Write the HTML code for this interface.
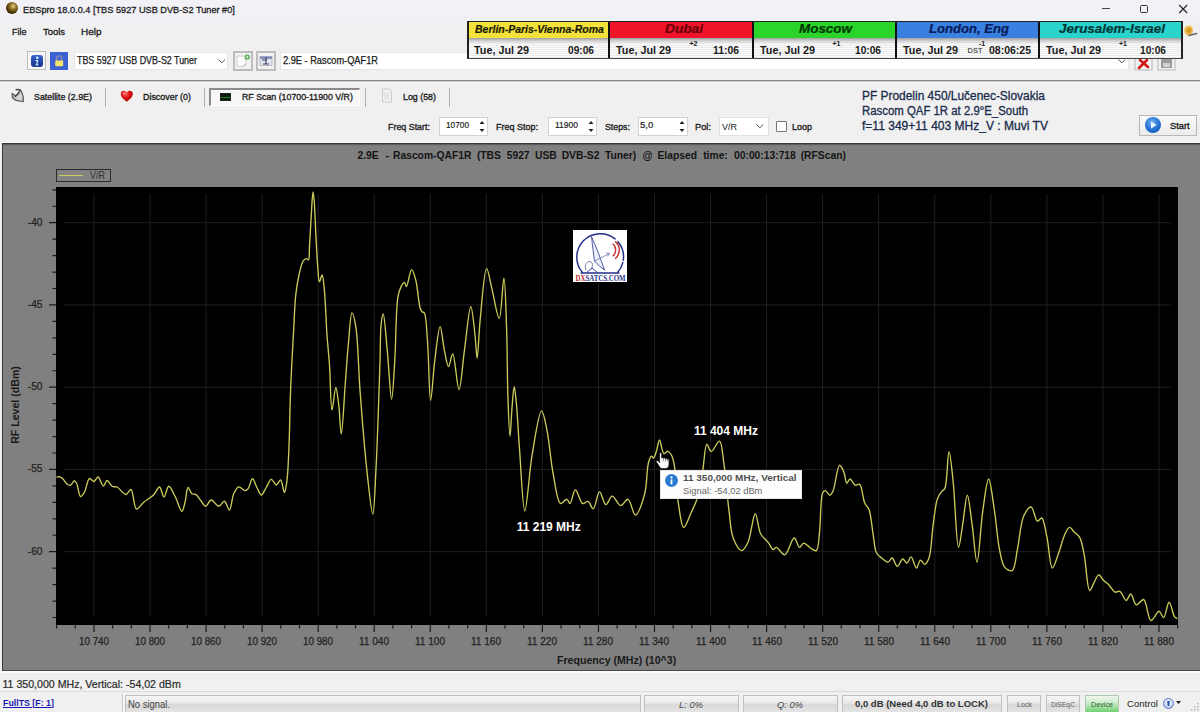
<!DOCTYPE html>
<html><head><meta charset="utf-8"><style>
html,body{margin:0;padding:0}
body{width:1200px;height:712px;overflow:hidden;position:relative;background:#f0f0f0;font-family:"Liberation Sans",sans-serif}
.t{position:absolute;white-space:nowrap;line-height:1;font-family:"Liberation Sans",sans-serif}
.r{position:absolute;box-sizing:border-box}
svg.r{overflow:visible}
</style></head><body>
<div class="r" style="left:0px;top:0px;width:1200px;height:22px;background:#f2f1f6"></div>
<div class="r" style="left:6px;top:2px;width:12px;height:12px;border-radius:50%;background:radial-gradient(circle at 60% 35%,#e8d8a0 0,#a08030 25%,#4a3508 60%,#1e1400 100%)"></div>
<div class="t" style="left:23.30px;top:4.57px;font-size:9.6px;font-weight:400;color:#1c1c1c;transform:scaleX(0.9573);transform-origin:0 0;-webkit-text-stroke:0.3px #1c1c1c;">EBSpro 18.0.0.4 [TBS 5927 USB DVB-S2 Tuner #0]</div>
<div class="r" style="left:1102px;top:8px;width:8px;height:1.3px;background:#444"></div>
<div class="r" style="left:1139.5px;top:5px;width:8.5px;height:8px;border:1.3px solid #333;border-radius:1.5px"></div>
<svg class="r" style="left:1178.5px;top:5px" width="9" height="8"><path d="M0.2,0 L8.2,8 M8.2,0 L0.2,8" stroke="#222" stroke-width="1.1"/></svg>
<div class="t" style="left:11.50px;top:26.70px;font-size:9.8px;font-weight:400;color:#1a1a1a;transform:scaleX(0.9182);transform-origin:0 0;-webkit-text-stroke:0.3px #1a1a1a;">File</div>
<div class="t" style="left:42.70px;top:26.70px;font-size:9.8px;font-weight:400;color:#1a1a1a;transform:scaleX(0.9616);transform-origin:0 0;-webkit-text-stroke:0.3px #1a1a1a;">Tools</div>
<div class="t" style="left:80.80px;top:26.70px;font-size:9.8px;font-weight:400;color:#1a1a1a;transform:scaleX(1.0171);transform-origin:0 0;-webkit-text-stroke:0.3px #1a1a1a;">Help</div>
<div class="r" style="left:27px;top:51px;width:19px;height:19px;border:1px solid #bdbdbd;background:#f6f6f6"></div>
<div class="r" style="left:31px;top:55px;width:12px;height:12px;border-radius:3px;background:linear-gradient(#3a64d0,#14308c);"></div>
<svg class="r" style="left:31px;top:55px" width="12" height="12"><circle cx="6.3" cy="2.8" r="1.2" fill="#dff"/><path d="M4.6,5 L7.2,5 L6.4,9.6 L7.6,9.6 L7.4,10.5 L4.4,10.5 L4.6,9.6 L5.3,9.6 L5.8,5.9 L4.5,5.9Z" fill="#dff"/></svg>
<div class="r" style="left:50px;top:52px;width:18px;height:18px;background:#3d60d2"></div>
<svg class="r" style="left:50px;top:52px" width="18" height="18"><path d="M6.5,9 V6.5 A2.6,2.6 0 0 1 11.7,6.5 V9" fill="none" stroke="#8a8cae" stroke-width="1.4"/><rect x="5.2" y="8.6" width="8" height="5.6" rx="1" fill="#f2e46a"/></svg>
<div class="r" style="left:74px;top:52px;width:154px;height:18px;background:#fff;border:1px solid #e6e6e6"></div>
<div class="t" style="left:77.20px;top:56.15px;font-size:10.1px;font-weight:400;color:#1a1a1a;transform:scaleX(0.8797);transform-origin:0 0;-webkit-text-stroke:0.25px #1a1a1a;">TBS 5927 USB DVB-S2 Tuner</div>
<svg class="r" style="left:218px;top:59px" width="8" height="5"><path d="M0.5,0.5 L3.8,3.8 L7.2,0.5" fill="none" stroke="#555" stroke-width="1"/></svg>
<div class="r" style="left:233px;top:51px;width:20px;height:20px;border:2px solid #bcbcbc;background:#f2f2f2"></div>
<svg class="r" style="left:233px;top:51px" width="20" height="20"><path d="M4,5 H13 V13 L11,15.5 H4 Z" fill="#fbfbfb" stroke="#c8c8c8" stroke-width="0.8"/><path d="M11,15.5 L11.5,13.5 L13,13" fill="none" stroke="#aaa" stroke-width="0.8"/><circle cx="14.2" cy="6" r="2.6" fill="#3aa040"/><path d="M14.2,4.4 V7.6 M12.6,6 H15.8" stroke="#e8ffe8" stroke-width="1"/></svg>
<div class="r" style="left:256px;top:51px;width:20px;height:20px;border:2px solid #bcbcbc;background:#f2f2f2"></div>
<svg class="r" style="left:256px;top:51px" width="20" height="20"><rect x="4" y="5.5" width="12" height="9" fill="#e6e6ee" stroke="#a8a8b8" stroke-width="0.8"/><rect x="4" y="5.5" width="12" height="2.5" fill="#8890c0"/><path d="M10,6 V13 M7,13 H13 M6,9 H11" stroke="#3a4060" stroke-width="1.1"/></svg>
<div class="r" style="left:280px;top:52px;width:849px;height:18px;background:#fff;border:1px solid #e6e6e6"></div>
<div class="t" style="left:283.00px;top:56.20px;font-size:10.1px;font-weight:400;color:#1a1a1a;transform:scaleX(0.9149);transform-origin:0 0;-webkit-text-stroke:0.25px #1a1a1a;">2.9E - Rascom-QAF1R</div>
<svg class="r" style="left:1118px;top:59px" width="8" height="5"><path d="M0.5,0.5 L3.8,3.8 L7.2,0.5" fill="none" stroke="#555" stroke-width="1"/></svg>
<div class="r" style="left:1134px;top:51px;width:19px;height:20px;border:2px solid #d4d4d4;background:#f2f2f2"></div>
<svg class="r" style="left:1134px;top:51px" width="19" height="20"><path d="M5,17 L13,9 M6,9 L14,16" stroke="#d01818" stroke-width="2.6" stroke-linecap="round"/></svg>
<div class="r" style="left:1157px;top:51px;width:19px;height:20px;border:2px solid #d4d4d4;background:#f2f2f2"></div>
<svg class="r" style="left:1157px;top:51px" width="19" height="20"><rect x="4" y="7" width="11" height="10" fill="#9a9a9a"/><rect x="6" y="12" width="7" height="4" fill="#d0d0d0"/></svg>
<div class="r" style="left:1184px;top:24.5px;width:9px;height:11.5px;border-radius:50%;background:radial-gradient(circle at 55% 50%,#d08a10 0,#e8b040 40%,#f8e0a0 75%,rgba(248,230,180,0) 100%)"></div><svg class="r" style="left:1188px;top:31px" width="10" height="6"><path d="M1,4.5 L8.5,2.5" stroke="#6a6a6a" stroke-width="1.6" stroke-linecap="round"/></svg>
<div class="r" style="left:0px;top:80px;width:1200px;height:1px;background:#8c8c8c"></div>
<div class="r" style="left:0px;top:81px;width:1200px;height:1px;background:#c8c8c8"></div>
<div class="r" style="left:0px;top:82px;width:1200px;height:1px;background:#fcfcfc"></div>
<div class="r" style="left:467px;top:21px;width:715px;height:38px;background:#fff;border:1px solid #222"></div>
<div class="r" style="left:467px;top:22px;width:142px;height:16px;background:#f2e23a"></div>
<div class="r" style="left:467px;top:38px;width:142px;height:6px;background:linear-gradient(#a0a0a0,#d4d4d4 50%,#f0f0f0)"></div>
<div class="r" style="left:467px;top:44px;width:142px;height:14px;background:repeating-linear-gradient(#fafafa 0 1px,#ececec 1px 2px)"></div>
<div class="r" style="left:609px;top:22px;width:144px;height:16px;background:#f0142a"></div>
<div class="r" style="left:609px;top:38px;width:144px;height:6px;background:linear-gradient(#a0a0a0,#d4d4d4 50%,#f0f0f0)"></div>
<div class="r" style="left:609px;top:44px;width:144px;height:14px;background:repeating-linear-gradient(#fafafa 0 1px,#ececec 1px 2px)"></div>
<div class="r" style="left:753px;top:22px;width:143px;height:16px;background:#2ad42a"></div>
<div class="r" style="left:753px;top:38px;width:143px;height:6px;background:linear-gradient(#a0a0a0,#d4d4d4 50%,#f0f0f0)"></div>
<div class="r" style="left:753px;top:44px;width:143px;height:14px;background:repeating-linear-gradient(#fafafa 0 1px,#ececec 1px 2px)"></div>
<div class="r" style="left:896px;top:22px;width:143px;height:16px;background:#3a80e0"></div>
<div class="r" style="left:896px;top:38px;width:143px;height:6px;background:linear-gradient(#a0a0a0,#d4d4d4 50%,#f0f0f0)"></div>
<div class="r" style="left:896px;top:44px;width:143px;height:14px;background:repeating-linear-gradient(#fafafa 0 1px,#ececec 1px 2px)"></div>
<div class="r" style="left:1039px;top:22px;width:143px;height:16px;background:#28d4cc"></div>
<div class="r" style="left:1039px;top:38px;width:143px;height:6px;background:linear-gradient(#a0a0a0,#d4d4d4 50%,#f0f0f0)"></div>
<div class="r" style="left:1039px;top:44px;width:143px;height:14px;background:repeating-linear-gradient(#fafafa 0 1px,#ececec 1px 2px)"></div>
<div class="r" style="left:608px;top:21px;width:2px;height:38px;background:#111"></div>
<div class="r" style="left:752px;top:21px;width:2px;height:38px;background:#111"></div>
<div class="r" style="left:895px;top:21px;width:2px;height:38px;background:#111"></div>
<div class="r" style="left:1038px;top:21px;width:2px;height:38px;background:#111"></div>
<div class="r" style="left:467px;top:21px;width:716px;height:38px;border:1px solid #222;border-left-width:2px;border-right-width:2px;border-bottom-color:#444"></div>
<div class="t" style="left:475.00px;top:23.73px;font-size:10.6px;font-weight:700;font-style:italic;color:#1a1a00;transform:scaleX(0.9895);transform-origin:0 0;-webkit-text-stroke:0.2px #1a1a00;">Berlin-Paris-Vienna-Roma</div>
<div class="t" style="left:664.70px;top:22.84px;font-size:12px;font-weight:700;font-style:italic;color:#6a0008;transform:scaleX(1.1400);transform-origin:0 0;-webkit-text-stroke:0.2px #6a0008;">Dubai</div>
<div class="t" style="left:798.50px;top:22.84px;font-size:12px;font-weight:700;font-style:italic;color:#003800;transform:scaleX(1.1196);transform-origin:0 0;-webkit-text-stroke:0.2px #003800;">Moscow</div>
<div class="t" style="left:929.00px;top:22.84px;font-size:12px;font-weight:700;font-style:italic;color:#081c5a;transform:scaleX(1.0912);transform-origin:0 0;-webkit-text-stroke:0.2px #081c5a;">London, Eng</div>
<div class="t" style="left:1059.00px;top:22.84px;font-size:12px;font-weight:700;font-style:italic;color:#003838;transform:scaleX(1.1190);transform-origin:0 0;-webkit-text-stroke:0.2px #003838;">Jerusalem-Israel</div>
<div class="t" style="left:474.00px;top:44.56px;font-size:10.8px;font-weight:700;color:#1a1a1a;">Tue, Jul 29</div>
<div class="t" style="left:616.00px;top:44.56px;font-size:10.8px;font-weight:700;color:#1a1a1a;">Tue, Jul 29</div>
<div class="t" style="left:760.00px;top:44.56px;font-size:10.8px;font-weight:700;color:#1a1a1a;">Tue, Jul 29</div>
<div class="t" style="left:903.00px;top:44.56px;font-size:10.8px;font-weight:700;color:#1a1a1a;">Tue, Jul 29</div>
<div class="t" style="left:1046.00px;top:44.56px;font-size:10.8px;font-weight:700;color:#1a1a1a;">Tue, Jul 29</div>
<div class="t" style="left:568.00px;top:44.56px;font-size:10.8px;font-weight:700;color:#1a1a1a;transform:scaleX(0.9413);transform-origin:0 0;">09:06</div>
<div class="t" style="left:713.00px;top:44.56px;font-size:10.8px;font-weight:700;color:#1a1a1a;transform:scaleX(0.9620);transform-origin:0 0;">11:06</div>
<div class="t" style="left:855.00px;top:44.56px;font-size:10.8px;font-weight:700;color:#1a1a1a;transform:scaleX(0.9413);transform-origin:0 0;">10:06</div>
<div class="t" style="left:989.00px;top:44.56px;font-size:10.8px;font-weight:700;color:#1a1a1a;transform:scaleX(0.9715);transform-origin:0 0;">08:06:25</div>
<div class="t" style="left:1140.00px;top:44.56px;font-size:10.8px;font-weight:700;color:#1a1a1a;transform:scaleX(0.9413);transform-origin:0 0;">10:06</div>
<div class="t" style="left:689.50px;top:39.57px;font-size:7px;font-weight:700;color:#1a1a1a;">+2</div>
<div class="t" style="left:832.50px;top:39.57px;font-size:7px;font-weight:700;color:#1a1a1a;">+1</div>
<div class="t" style="left:979.00px;top:39.57px;font-size:7px;font-weight:700;color:#1a1a1a;">-1</div>
<div class="t" style="left:967.50px;top:47.25px;font-size:7.5px;font-weight:400;color:#1a1a1a;">DST</div>
<div class="t" style="left:1119.00px;top:39.57px;font-size:7px;font-weight:700;color:#1a1a1a;">+1</div>
<svg class="r" style="left:6px;top:84px" width="24" height="22"><path d="M6.2,9.5 C5.5,13.5 8,16.5 12.5,16.8 C14.5,17 16,17.2 17.2,17.6 C17.6,15 17.5,12 16.2,9.5 C15.6,7.8 14.8,6.6 14.2,6 L11.5,10.5 L9.5,12 C8.5,11.2 7.5,10.2 6.2,9.5 Z" fill="#d4d4d4" stroke="#5a5a5a" stroke-width="1.3" stroke-linejoin="round"/><path d="M9.2,12.4 L13.2,8.8 M10.2,5.8 C11.5,5.2 13,5.5 14.4,6.4" fill="none" stroke="#4a4a4a" stroke-width="1.5" stroke-linecap="round"/></svg>
<div class="t" style="left:34.00px;top:92.51px;font-size:9.2px;font-weight:400;color:#1e1e1e;transform:scaleX(0.9612);transform-origin:0 0;-webkit-text-stroke:0.35px #1e1e1e;">Satellite (2.9E)</div>
<div class="r" style="left:105px;top:88px;width:1px;height:19px;background:#b0b0b0"></div>
<svg class="r" style="left:119.8px;top:89.6px" width="13.5" height="12.6" viewBox="0 0 15 14"><defs><radialGradient id="hg" cx="40%" cy="30%" r="75%"><stop offset="0" stop-color="#ff6060"/><stop offset="0.5" stop-color="#e01010"/><stop offset="1" stop-color="#900000"/></radialGradient></defs><path d="M7.5,13 C3,9.5 0.8,7.2 0.8,4.4 C0.8,2.2 2.4,0.9 4.2,0.9 C5.8,0.9 6.9,1.9 7.5,3 C8.1,1.9 9.2,0.9 10.8,0.9 C12.6,0.9 14.2,2.2 14.2,4.4 C14.2,7.2 12,9.5 7.5,13Z" fill="url(#hg)"/><ellipse cx="4.4" cy="3.8" rx="1.6" ry="1" fill="#ffb0b0" opacity="0.8"/></svg>
<div class="t" style="left:143.00px;top:92.51px;font-size:9.2px;font-weight:400;color:#1e1e1e;transform:scaleX(0.9680);transform-origin:0 0;-webkit-text-stroke:0.35px #1e1e1e;">Discover (0)</div>
<div class="r" style="left:204px;top:88px;width:1px;height:19px;background:#b0b0b0"></div>
<div class="r" style="left:209px;top:88px;width:151px;height:18px;background:#f7f7f7;border-top:2px solid #8a8a8a;border-left:2px solid #8a8a8a;border-right:1px solid #fff;border-bottom:1px solid #fff"></div>
<div class="r" style="left:220px;top:93px;width:11px;height:8px;background:#0a1a0a;border:1px solid #222"></div>
<div class="r" style="left:221px;top:96.5px;width:9px;height:1.2px;background:#1a8a2a"></div>
<div class="t" style="left:242.00px;top:92.51px;font-size:9.2px;font-weight:400;color:#1e1e1e;transform:scaleX(0.9576);transform-origin:0 0;-webkit-text-stroke:0.35px #1e1e1e;">RF Scan (10700-11900 V/R)</div>
<div class="r" style="left:365px;top:88px;width:1px;height:19px;background:#b0b0b0"></div>
<svg class="r" style="left:381px;top:88px" width="12" height="15"><path d="M1.5,1 H8 L10.5,3.5 V14 H1.5 Z" fill="#f4f4f4" stroke="#c8c8c8" stroke-width="1"/><path d="M3,5 H8.5 M3,7 H8.5 M3,9 H8.5 M3,11 H8.5" stroke="#cfcfcf" stroke-width="0.8"/></svg>
<div class="t" style="left:403.00px;top:92.51px;font-size:9.2px;font-weight:400;color:#1e1e1e;transform:scaleX(0.9630);transform-origin:0 0;-webkit-text-stroke:0.35px #1e1e1e;">Log (58)</div>
<div class="r" style="left:449px;top:88px;width:1px;height:19px;background:#b0b0b0"></div>
<div class="t" style="left:388.00px;top:123.01px;font-size:9.2px;font-weight:400;color:#1e1e1e;transform:scaleX(0.9665);transform-origin:0 0;-webkit-text-stroke:0.35px #1e1e1e;">Freq Start:</div>
<div class="r" style="left:439px;top:117px;width:49px;height:19px;background:#fff;border:1px solid #d2d2d2"></div>
<div class="t" style="left:446.00px;top:120.37px;font-size:9.6px;font-weight:400;color:#1a1a1a;transform:scaleX(0.8616);transform-origin:0 0;-webkit-text-stroke:0.2px #1a1a1a;">10700</div>
<svg class="r" style="left:477px;top:118px" width="10" height="17"><path d="M2.5,6 L5,3 L7.5,6Z M2.5,11 L5,14 L7.5,11Z" fill="#222"/></svg>
<div class="t" style="left:496.00px;top:123.01px;font-size:9.2px;font-weight:400;color:#1e1e1e;transform:scaleX(0.9778);transform-origin:0 0;-webkit-text-stroke:0.35px #1e1e1e;">Freq Stop:</div>
<div class="r" style="left:548px;top:117px;width:49px;height:19px;background:#fff;border:1px solid #d2d2d2"></div>
<div class="t" style="left:555.00px;top:120.37px;font-size:9.6px;font-weight:400;color:#1a1a1a;transform:scaleX(0.8852);transform-origin:0 0;-webkit-text-stroke:0.2px #1a1a1a;">11900</div>
<svg class="r" style="left:586px;top:118px" width="10" height="17"><path d="M2.5,6 L5,3 L7.5,6Z M2.5,11 L5,14 L7.5,11Z" fill="#222"/></svg>
<div class="t" style="left:605.00px;top:123.01px;font-size:9.2px;font-weight:400;color:#1e1e1e;transform:scaleX(0.9585);transform-origin:0 0;-webkit-text-stroke:0.35px #1e1e1e;">Steps:</div>
<div class="r" style="left:638px;top:117px;width:50px;height:19px;background:#fff;border:1px solid #d2d2d2"></div>
<div class="t" style="left:640.00px;top:120.47px;font-size:9.6px;font-weight:400;color:#1a1a1a;-webkit-text-stroke:0.2px #1a1a1a;">5,0</div>
<svg class="r" style="left:677px;top:118px" width="10" height="17"><path d="M2.5,6 L5,3 L7.5,6Z M2.5,11 L5,14 L7.5,11Z" fill="#222"/></svg>
<div class="t" style="left:695.00px;top:123.01px;font-size:9.2px;font-weight:400;color:#1e1e1e;transform:scaleX(1.0093);transform-origin:0 0;-webkit-text-stroke:0.35px #1e1e1e;">Pol:</div>
<div class="r" style="left:719px;top:117px;width:50px;height:19px;background:#fff;border:1px solid #e2e2e2"></div>
<div class="t" style="left:722.00px;top:122.27px;font-size:9.6px;font-weight:400;color:#1a1a1a;transform:scaleX(0.9373);transform-origin:0 0;">V/R</div>
<svg class="r" style="left:756px;top:124px" width="8" height="5"><path d="M0.5,0.5 L3.8,3.8 L7.2,0.5" fill="none" stroke="#555" stroke-width="1"/></svg>
<div class="r" style="left:776px;top:121px;width:11px;height:11px;border:1px solid #777;background:#fff;border-radius:1px"></div>
<div class="t" style="left:792.00px;top:123.01px;font-size:9.2px;font-weight:400;color:#1e1e1e;transform:scaleX(0.9772);transform-origin:0 0;-webkit-text-stroke:0.35px #1e1e1e;">Loop</div>
<div class="t" style="left:862.00px;top:90.19px;font-size:12.3px;font-weight:400;color:#1a2c4c;transform:scaleX(0.9697);transform-origin:0 0;-webkit-text-stroke:0.3px #1a2c4c;">PF Prodelin 450/Lučenec-Slovakia</div>
<div class="t" style="left:862.00px;top:105.09px;font-size:12.3px;font-weight:400;color:#1a2c4c;transform:scaleX(0.9261);transform-origin:0 0;-webkit-text-stroke:0.3px #1a2c4c;">Rascom QAF 1R at 2.9°E_South</div>
<div class="t" style="left:862.00px;top:119.99px;font-size:12.3px;font-weight:400;color:#1a2c4c;transform:scaleX(0.9786);transform-origin:0 0;-webkit-text-stroke:0.3px #1a2c4c;">f=11 349+11 403 MHz_V : Muvi TV</div>
<div class="r" style="left:1139px;top:115px;width:58px;height:21px;border:1px solid #b8b8b8;background:linear-gradient(#fafafa,#ececec)"></div>
<div class="r" style="left:1145px;top:117px;width:16px;height:16px;border-radius:50%;background:radial-gradient(circle at 45% 35%,#7ab8f0 0,#2a78d8 45%,#0c4aa8 100%)"></div>
<svg class="r" style="left:1145px;top:117px" width="16" height="16"><path d="M6,4.5 L11.5,8 L6,11.5Z" fill="#e8f6ff"/></svg>
<div class="t" style="left:1170.30px;top:120.57px;font-size:9.6px;font-weight:400;color:#1a1a1a;transform:scaleX(0.9717);transform-origin:0 0;-webkit-text-stroke:0.35px #1a1a1a;">Start</div>
<div class="r" style="left:0px;top:142px;width:1200px;height:1px;background:#fcfcfc"></div>
<div class="r" style="left:2px;top:143px;width:1198px;height:528px;background:#808080;border-top:1px solid #383838;border-left:1px solid #3a3a3a;border-bottom:1px solid #4a4a4a"></div>
<div class="r" style="left:3px;top:144px;width:1197px;height:1px;background:#5e5e5e"></div>
<div class="r" style="left:3px;top:145px;width:1197px;height:1px;background:#7a7a7a"></div>
<div class="t" style="left:357.50px;top:151.18px;font-size:10.3px;font-weight:700;color:#141414;">2.9E</div>
<div class="t" style="left:385.60px;top:151.18px;font-size:10.3px;font-weight:700;color:#141414;">-</div>
<div class="t" style="left:393.00px;top:151.18px;font-size:10.3px;font-weight:700;color:#141414;">Rascom-QAF1R</div>
<div class="t" style="left:476.90px;top:151.18px;font-size:10.3px;font-weight:700;color:#141414;">(TBS</div>
<div class="t" style="left:506.70px;top:151.18px;font-size:10.3px;font-weight:700;color:#141414;">5927</div>
<div class="t" style="left:535.00px;top:151.18px;font-size:10.3px;font-weight:700;color:#141414;">USB</div>
<div class="t" style="left:561.70px;top:151.18px;font-size:10.3px;font-weight:700;color:#141414;">DVB-S2</div>
<div class="t" style="left:605.00px;top:151.18px;font-size:10.3px;font-weight:700;color:#141414;">Tuner)</div>
<div class="t" style="left:642.50px;top:151.18px;font-size:10.3px;font-weight:700;color:#141414;">@</div>
<div class="t" style="left:657.50px;top:151.18px;font-size:10.3px;font-weight:700;color:#141414;">Elapsed</div>
<div class="t" style="left:703.20px;top:151.18px;font-size:10.3px;font-weight:700;color:#141414;">time:</div>
<div class="t" style="left:734.00px;top:151.18px;font-size:10.3px;font-weight:700;color:#141414;">00:00:13:718</div>
<div class="t" style="left:800.70px;top:151.18px;font-size:10.3px;font-weight:700;color:#141414;">(RFScan)</div>
<div class="r" style="left:56px;top:169px;width:55px;height:13px;border:1px solid #2a2a2a;background:#838383"></div>
<div class="r" style="left:59px;top:174.5px;width:24px;height:1.2px;background:#cccc5a"></div>
<div class="t" style="left:90.00px;top:171.03px;font-size:10px;font-weight:400;color:#303030;transform:scaleX(0.8998);transform-origin:0 0;">V/R</div>
<div class="r" style="left:56px;top:187px;width:1122px;height:438px;background:#000"></div>
<div class="r" style="left:56px;top:187px;width:1122px;height:438px;overflow:hidden"><svg style="position:absolute;left:-56px;top:-187px" width="1200" height="712"><path d="M93.97,194 V616 M150.02,194 V616 M206.07,194 V616 M262.12,194 V616 M318.18,194 V616 M374.23,194 V616 M430.28,194 V616 M486.33,194 V616 M542.38,194 V616 M598.44,194 V616 M654.49,194 V616 M710.54,194 V616 M766.59,194 V616 M822.64,194 V616 M878.70,194 V616 M934.75,194 V616 M990.80,194 V616 M1046.85,194 V616 M1102.90,194 V616 M1158.96,194 V616 M64,222.70 H1171 M64,304.95 H1171 M64,387.20 H1171 M64,469.45 H1171 M64,551.70 H1171" stroke="#1f1f1f" stroke-width="1" fill="none"/><path d="M56.60,625 V628.5 M75.28,625 V628.5 M93.97,625 V632 M112.65,625 V628.5 M131.34,625 V628.5 M150.02,625 V632 M168.70,625 V628.5 M187.39,625 V628.5 M206.07,625 V632 M224.76,625 V628.5 M243.44,625 V628.5 M262.12,625 V632 M280.81,625 V628.5 M299.49,625 V628.5 M318.18,625 V632 M336.86,625 V628.5 M355.54,625 V628.5 M374.23,625 V632 M392.91,625 V628.5 M411.60,625 V628.5 M430.28,625 V632 M448.96,625 V628.5 M467.65,625 V628.5 M486.33,625 V632 M505.02,625 V628.5 M523.70,625 V628.5 M542.38,625 V632 M561.07,625 V628.5 M579.75,625 V628.5 M598.44,625 V632 M617.12,625 V628.5 M635.80,625 V628.5 M654.49,625 V632 M673.17,625 V628.5 M691.86,625 V628.5 M710.54,625 V632 M729.22,625 V628.5 M747.91,625 V628.5 M766.59,625 V632 M785.28,625 V628.5 M803.96,625 V628.5 M822.64,625 V632 M841.33,625 V628.5 M860.01,625 V628.5 M878.70,625 V632 M897.38,625 V628.5 M916.06,625 V628.5 M934.75,625 V632 M953.43,625 V628.5 M972.12,625 V628.5 M990.80,625 V632 M1009.48,625 V628.5 M1028.17,625 V628.5 M1046.85,625 V632 M1065.54,625 V628.5 M1084.22,625 V628.5 M1102.90,625 V632 M1121.59,625 V628.5 M1140.27,625 V628.5 M1158.96,625 V632 M1177.64,625 V628.5 M56,189.80 H52.5 M56,206.25 H52.5 M56,222.70 H49 M56,239.15 H52.5 M56,255.60 H52.5 M56,272.05 H52.5 M56,288.50 H52.5 M56,304.95 H49 M56,321.40 H52.5 M56,337.85 H52.5 M56,354.30 H52.5 M56,370.75 H52.5 M56,387.20 H49 M56,403.65 H52.5 M56,420.10 H52.5 M56,436.55 H52.5 M56,453.00 H52.5 M56,469.45 H49 M56,485.90 H52.5 M56,502.35 H52.5 M56,518.80 H52.5 M56,535.25 H52.5 M56,551.70 H49 M56,568.15 H52.5 M56,584.60 H52.5 M56,601.05 H52.5 M56,617.50 H52.5" stroke="#1a1a1a" stroke-width="1.2" fill="none"/><path d="M56.50,477.00 C57.67,476.93 58.93,476.48 60.00,476.80 C61.10,477.13 61.96,478.02 63.00,479.00 C64.43,480.36 65.91,483.60 67.50,484.50 C68.62,485.13 69.99,485.43 71.00,485.00 C72.22,484.48 72.98,480.92 74.00,480.80 C74.82,480.71 75.73,481.79 76.50,483.00 C78.09,485.49 78.74,496.11 80.50,496.50 C81.65,496.76 83.27,494.05 84.50,492.00 C86.41,488.82 87.35,479.20 89.50,478.50 C90.82,478.07 92.61,481.68 94.00,481.50 C95.46,481.31 96.64,476.88 98.00,477.00 C99.79,477.16 101.86,485.99 103.50,486.00 C104.79,486.01 105.61,480.62 107.00,480.50 C108.55,480.36 110.56,485.52 112.50,486.50 C113.94,487.23 115.36,486.30 117.00,487.00 C119.64,488.12 123.48,494.61 126.00,494.50 C127.96,494.41 129.55,489.12 131.00,489.50 C133.45,490.14 133.74,508.22 136.50,509.00 C138.40,509.53 140.87,504.71 143.50,502.50 C146.59,499.90 151.22,497.34 154.00,494.50 C156.34,492.12 157.88,486.83 159.50,487.00 C161.26,487.18 162.49,497.01 164.00,497.00 C165.57,496.99 166.92,486.38 168.75,486.25 C170.58,486.12 172.98,492.51 175.00,496.25 C177.39,500.68 180.13,511.33 181.90,511.25 C183.23,511.19 184.07,505.84 185.00,502.50 C186.20,498.20 186.59,487.76 188.10,487.50 C189.14,487.32 190.37,492.70 191.90,493.75 C193.00,494.50 194.37,493.68 195.60,494.40 C197.49,495.50 199.48,499.16 201.25,501.25 C202.78,503.06 204.05,506.24 205.60,506.25 C207.35,506.27 209.16,500.15 211.25,500.00 C213.50,499.84 216.44,506.28 218.75,506.25 C220.78,506.22 222.72,500.97 224.40,501.25 C226.34,501.57 227.97,510.19 229.40,510.00 C231.25,509.76 231.78,497.88 233.75,493.75 C235.15,490.82 236.78,487.31 238.75,486.90 C240.57,486.52 243.28,490.60 245.00,490.60 C246.21,490.60 247.14,489.84 248.10,488.75 C249.78,486.85 250.99,478.79 252.50,478.75 C253.93,478.71 255.39,484.72 256.90,487.50 C258.32,490.12 259.71,494.95 261.25,495.00 C262.82,495.05 264.61,490.06 266.25,487.50 C267.94,484.87 269.47,479.56 271.25,479.40 C272.83,479.26 274.65,485.01 276.25,485.00 C277.76,484.99 279.38,479.74 280.60,480.00 C282.32,480.37 283.33,492.54 284.40,492.50 C285.41,492.46 286.24,485.72 286.90,481.00 C287.93,473.65 288.21,463.94 288.75,452.50 C289.57,435.21 289.86,408.04 290.70,387.30 C291.47,368.37 292.58,349.55 293.50,333.00 C294.28,319.06 294.63,305.07 295.80,294.50 C296.63,287.04 297.56,281.39 298.90,275.50 C300.09,270.25 301.33,263.37 303.20,260.80 C304.13,259.53 305.35,258.77 306.30,258.70 C307.05,258.64 307.86,260.01 308.40,259.70 C309.71,258.94 309.13,251.43 309.50,246.00 C310.05,238.05 310.59,225.96 311.20,216.60 C311.76,208.03 312.37,192.02 313.00,192.00 C313.36,191.99 313.76,196.22 314.10,199.70 C314.80,206.96 315.18,222.00 315.80,233.40 C316.44,245.15 317.11,260.32 317.90,269.20 C318.37,274.48 318.51,281.68 319.40,281.80 C320.08,281.89 321.36,274.92 322.10,275.00 C323.10,275.11 323.67,283.63 324.20,288.20 C324.76,293.10 324.92,297.49 325.30,303.50 C325.84,312.12 326.29,324.63 327.00,335.00 C327.70,345.13 328.74,353.98 329.50,365.00 C330.44,378.48 330.61,409.92 332.00,410.00 C332.99,410.06 334.62,387.50 335.80,387.50 C336.83,387.50 337.86,398.19 338.70,404.70 C339.79,413.16 340.37,434.00 341.30,434.00 C342.52,433.99 344.06,399.18 345.30,383.30 C346.40,369.23 347.19,355.88 348.40,343.50 C349.46,332.62 350.40,313.02 352.00,312.90 C353.08,312.82 354.73,320.29 355.80,326.60 C358.07,339.94 358.31,367.73 360.00,390.00 C361.88,414.83 364.22,446.09 366.70,468.70 C368.59,485.90 371.25,514.05 372.80,514.00 C374.35,513.95 375.01,487.00 376.00,468.70 C377.52,440.65 379.12,388.48 380.00,362.00 C380.52,346.31 380.12,333.12 381.10,324.50 C381.62,319.89 382.49,313.97 383.20,314.00 C384.55,314.06 386.07,338.55 387.40,351.90 C388.89,366.81 390.32,399.30 391.60,399.30 C392.76,399.30 393.85,374.87 394.80,360.30 C396.01,341.77 395.79,309.23 397.90,297.10 C398.78,292.05 399.76,289.23 401.10,286.60 C402.03,284.78 403.40,282.32 404.30,282.40 C405.15,282.48 405.63,286.66 406.40,286.60 C407.89,286.48 409.86,269.77 411.60,269.70 C413.00,269.64 414.59,275.86 415.80,280.30 C417.69,287.23 418.48,302.63 420.10,307.70 C420.77,309.79 421.33,311.04 422.20,311.90 C422.81,312.50 423.69,312.05 424.30,312.90 C426.36,315.78 426.50,328.66 427.40,339.30 C428.77,355.44 429.17,400.36 430.60,400.40 C431.76,400.43 433.13,373.07 434.80,360.30 C436.34,348.56 438.38,326.62 440.10,326.60 C441.53,326.58 442.77,342.71 444.30,349.80 C445.61,355.87 446.99,366.54 448.50,366.60 C449.82,366.65 451.35,353.90 452.70,354.00 C454.93,354.16 457.08,389.54 459.00,389.50 C461.03,389.46 462.58,363.31 464.50,349.80 C466.50,335.70 468.91,306.60 470.80,306.60 C472.34,306.60 473.93,326.00 475.00,335.00 C475.97,343.11 476.35,358.20 477.10,358.20 C478.08,358.19 478.85,332.23 480.30,318.20 C481.92,302.56 484.11,268.87 486.60,268.70 C488.20,268.59 490.02,281.38 491.90,288.70 C494.17,297.57 497.27,318.32 499.20,318.20 C501.43,318.06 502.69,278.16 503.90,278.20 C505.25,278.24 505.94,310.65 506.60,328.70 C507.36,349.54 507.20,376.55 507.90,396.10 C508.44,411.17 509.24,436.09 510.00,436.10 C510.65,436.11 511.32,415.47 512.10,406.60 C512.74,399.28 513.45,386.61 514.20,386.60 C514.86,386.59 515.63,395.74 516.30,402.40 C517.45,413.77 518.22,432.13 519.50,448.70 C520.98,467.93 522.63,510.95 524.80,511.00 C526.87,511.05 529.08,472.51 532.10,455.00 C534.80,439.34 538.73,410.89 541.60,410.80 C543.50,410.74 545.28,422.09 546.90,429.80 C549.34,441.41 550.61,460.81 553.20,474.00 C555.34,484.89 556.97,502.10 560.60,503.50 C562.41,504.20 565.27,499.01 566.90,499.30 C568.26,499.54 568.96,503.64 570.00,503.50 C571.75,503.27 573.22,489.93 575.30,489.80 C577.44,489.66 579.95,502.50 582.70,503.50 C584.36,504.11 586.41,500.92 588.00,501.40 C590.01,502.00 591.57,509.01 593.20,508.80 C595.50,508.50 597.24,492.02 599.50,491.90 C601.51,491.79 603.60,504.40 605.90,504.60 C607.88,504.77 609.88,496.20 612.20,496.10 C614.74,495.99 617.79,505.40 620.60,505.60 C623.06,505.77 625.80,498.83 628.00,499.30 C630.94,499.93 632.83,515.04 635.40,515.00 C638.37,514.96 642.54,501.62 644.70,493.70 C647.19,484.56 646.63,469.47 648.40,463.00 C649.27,459.83 650.31,456.45 651.40,456.20 C652.07,456.05 652.84,458.15 653.50,458.00 C654.57,457.75 655.50,453.86 656.40,451.30 C657.54,448.06 658.33,440.03 659.50,440.00 C660.80,439.97 661.90,452.96 663.90,453.70 C665.03,454.12 666.58,451.13 667.80,451.30 C669.16,451.49 670.60,453.72 671.60,455.50 C672.85,457.73 673.31,460.07 674.10,464.00 C675.78,472.41 676.58,492.77 678.50,504.30 C679.97,513.11 681.30,527.10 683.70,527.40 C685.70,527.65 688.80,517.64 691.10,512.70 C693.36,507.83 695.63,503.77 697.40,498.00 C699.74,490.38 701.10,479.66 702.70,470.60 C704.26,461.73 704.81,444.58 706.90,444.20 C708.08,443.99 709.33,451.46 711.10,451.60 C713.32,451.78 717.45,440.60 719.50,441.10 C722.09,441.73 722.39,453.62 723.70,462.10 C725.68,474.90 727.18,496.74 729.00,510.60 C730.37,521.05 730.43,530.85 733.20,538.00 C735.25,543.28 738.93,550.52 741.60,550.60 C743.83,550.67 746.12,546.08 748.00,542.20 C751.14,535.72 753.05,513.71 755.30,513.70 C757.19,513.69 757.91,528.76 760.60,533.80 C762.57,537.50 765.82,539.43 768.00,542.20 C769.96,544.69 771.55,549.32 773.20,549.60 C774.27,549.78 775.05,547.33 776.30,547.40 C778.45,547.51 782.07,555.24 784.70,554.80 C788.16,554.22 791.49,538.00 794.20,538.00 C796.22,538.00 797.66,547.15 799.50,547.40 C800.86,547.59 802.04,543.34 803.70,543.20 C805.76,543.03 808.78,547.22 811.10,548.50 C812.92,549.50 814.97,551.33 816.30,550.60 C818.69,549.28 818.57,539.88 819.50,532.70 C820.88,522.04 820.19,497.57 822.70,492.70 C823.42,491.31 824.25,490.57 825.20,490.60 C826.56,490.64 828.63,495.34 830.00,495.20 C831.26,495.07 832.16,492.89 833.20,490.60 C835.44,485.67 837.08,465.72 839.50,465.30 C840.81,465.07 842.55,469.07 843.70,471.60 C845.16,474.79 845.53,482.95 846.90,483.20 C847.80,483.37 848.80,479.04 850.00,479.00 C851.51,478.95 853.44,484.71 855.30,485.30 C856.65,485.73 858.28,483.50 859.50,484.20 C862.10,485.69 862.73,498.68 864.80,503.20 C866.08,506.00 867.83,506.53 869.00,509.50 C871.16,514.97 871.87,527.10 873.20,534.80 C874.32,541.29 874.33,548.69 876.40,552.70 C877.72,555.26 879.68,556.43 881.60,558.00 C883.55,559.60 886.16,562.39 888.00,562.20 C889.62,562.03 890.82,557.84 892.20,558.00 C893.97,558.21 895.61,566.34 897.40,566.40 C899.12,566.46 900.95,559.14 902.70,559.00 C904.11,558.88 905.58,563.33 906.90,563.20 C908.40,563.05 909.71,556.80 911.10,556.90 C912.88,557.03 914.72,567.97 916.40,568.00 C917.83,568.02 918.94,560.34 920.50,560.10 C921.77,559.90 923.36,564.42 924.70,564.30 C926.21,564.16 927.81,561.14 929.00,558.00 C931.50,551.38 931.69,534.72 933.20,524.30 C934.51,515.25 935.35,504.80 937.40,499.00 C938.58,495.66 940.16,493.46 941.60,491.60 C942.64,490.25 943.88,490.36 944.80,488.50 C947.45,483.12 947.53,451.62 949.00,451.60 C950.34,451.58 951.88,470.00 953.20,482.10 C955.13,499.75 956.38,547.29 958.50,547.40 C959.77,547.46 961.31,532.45 962.70,524.30 C964.25,515.17 965.73,495.21 967.30,495.20 C968.87,495.19 970.58,513.95 972.10,524.30 C973.83,536.09 975.36,562.21 977.00,562.20 C978.89,562.18 980.50,526.59 982.70,511.60 C984.47,499.51 986.64,479.01 988.60,479.00 C990.50,478.99 992.58,498.62 994.30,509.50 C996.26,521.91 997.25,538.88 999.50,549.50 C1001.03,556.72 1001.83,564.05 1004.80,567.40 C1006.75,569.60 1010.27,571.56 1012.20,570.60 C1015.37,569.03 1015.68,557.38 1017.40,549.50 C1019.56,539.60 1020.35,523.13 1023.80,515.80 C1025.79,511.57 1028.96,506.71 1031.10,507.00 C1033.59,507.34 1035.08,520.48 1037.40,521.10 C1038.76,521.47 1040.45,517.56 1041.70,518.00 C1044.11,518.85 1045.31,529.78 1046.90,536.90 C1048.92,545.94 1049.83,567.72 1052.30,568.00 C1054.08,568.21 1056.67,558.27 1058.70,552.90 C1060.95,546.95 1062.80,538.35 1065.10,533.80 C1066.53,530.96 1068.00,527.55 1069.60,527.40 C1071.05,527.27 1072.60,530.32 1074.20,531.90 C1075.96,533.64 1078.20,534.78 1079.70,537.40 C1081.98,541.38 1082.78,547.94 1084.20,554.80 C1086.20,564.51 1087.10,589.83 1089.70,590.30 C1091.03,590.54 1092.75,584.74 1094.30,582.10 C1095.78,579.58 1097.21,574.91 1098.80,574.80 C1100.26,574.69 1101.72,578.62 1103.40,580.30 C1105.08,581.98 1107.07,583.11 1108.90,584.90 C1111.03,586.98 1113.14,591.47 1115.30,592.20 C1116.79,592.70 1118.35,590.72 1119.80,591.30 C1122.06,592.20 1124.24,600.39 1126.20,600.40 C1127.85,600.41 1129.29,593.88 1130.80,594.00 C1132.67,594.15 1133.94,604.34 1136.30,604.90 C1138.34,605.38 1141.51,598.85 1143.60,599.50 C1146.87,600.51 1147.76,619.87 1150.90,620.50 C1153.24,620.97 1156.84,611.17 1159.10,611.30 C1160.90,611.40 1162.20,617.89 1163.60,617.70 C1165.64,617.42 1167.24,602.22 1169.10,602.20 C1170.91,602.18 1172.67,614.37 1174.60,616.80 C1175.48,617.91 1176.40,618.00 1177.30,618.60" stroke="#cbcb5a" stroke-width="1.35" fill="none" stroke-linejoin="round"/></svg></div>
<svg class="r" style="left:0;top:0" width="1200" height="712"><path d="M56.60,625 V628.5 M75.28,625 V628.5 M93.97,625 V632 M112.65,625 V628.5 M131.34,625 V628.5 M150.02,625 V632 M168.70,625 V628.5 M187.39,625 V628.5 M206.07,625 V632 M224.76,625 V628.5 M243.44,625 V628.5 M262.12,625 V632 M280.81,625 V628.5 M299.49,625 V628.5 M318.18,625 V632 M336.86,625 V628.5 M355.54,625 V628.5 M374.23,625 V632 M392.91,625 V628.5 M411.60,625 V628.5 M430.28,625 V632 M448.96,625 V628.5 M467.65,625 V628.5 M486.33,625 V632 M505.02,625 V628.5 M523.70,625 V628.5 M542.38,625 V632 M561.07,625 V628.5 M579.75,625 V628.5 M598.44,625 V632 M617.12,625 V628.5 M635.80,625 V628.5 M654.49,625 V632 M673.17,625 V628.5 M691.86,625 V628.5 M710.54,625 V632 M729.22,625 V628.5 M747.91,625 V628.5 M766.59,625 V632 M785.28,625 V628.5 M803.96,625 V628.5 M822.64,625 V632 M841.33,625 V628.5 M860.01,625 V628.5 M878.70,625 V632 M897.38,625 V628.5 M916.06,625 V628.5 M934.75,625 V632 M953.43,625 V628.5 M972.12,625 V628.5 M990.80,625 V632 M1009.48,625 V628.5 M1028.17,625 V628.5 M1046.85,625 V632 M1065.54,625 V628.5 M1084.22,625 V628.5 M1102.90,625 V632 M1121.59,625 V628.5 M1140.27,625 V628.5 M1158.96,625 V632 M1177.64,625 V628.5 M56,189.80 H52.5 M56,206.25 H52.5 M56,222.70 H49 M56,239.15 H52.5 M56,255.60 H52.5 M56,272.05 H52.5 M56,288.50 H52.5 M56,304.95 H49 M56,321.40 H52.5 M56,337.85 H52.5 M56,354.30 H52.5 M56,370.75 H52.5 M56,387.20 H49 M56,403.65 H52.5 M56,420.10 H52.5 M56,436.55 H52.5 M56,453.00 H52.5 M56,469.45 H49 M56,485.90 H52.5 M56,502.35 H52.5 M56,518.80 H52.5 M56,535.25 H52.5 M56,551.70 H49 M56,568.15 H52.5 M56,584.60 H52.5 M56,601.05 H52.5 M56,617.50 H52.5" stroke="#1a1a1a" stroke-width="1.2" fill="none"/></svg>
<div class="t" style="left:27.76px;top:217.67px;font-size:10.2px;font-weight:400;color:#222;-webkit-text-stroke:0.25px #222;">-40</div>
<div class="t" style="left:27.76px;top:299.92px;font-size:10.2px;font-weight:400;color:#222;-webkit-text-stroke:0.25px #222;">-45</div>
<div class="t" style="left:27.76px;top:382.17px;font-size:10.2px;font-weight:400;color:#222;-webkit-text-stroke:0.25px #222;">-50</div>
<div class="t" style="left:27.76px;top:464.42px;font-size:10.2px;font-weight:400;color:#222;-webkit-text-stroke:0.25px #222;">-55</div>
<div class="t" style="left:27.76px;top:546.67px;font-size:10.2px;font-weight:400;color:#222;-webkit-text-stroke:0.25px #222;">-60</div>
<div class="t" style="left:78.97px;top:636.53px;font-size:10px;font-weight:400;color:#222;transform:scaleX(0.9808);transform-origin:0 0;-webkit-text-stroke:0.25px #222;">10 740</div>
<div class="t" style="left:135.02px;top:636.53px;font-size:10px;font-weight:400;color:#222;transform:scaleX(0.9808);transform-origin:0 0;-webkit-text-stroke:0.25px #222;">10 800</div>
<div class="t" style="left:191.07px;top:636.53px;font-size:10px;font-weight:400;color:#222;transform:scaleX(0.9808);transform-origin:0 0;-webkit-text-stroke:0.25px #222;">10 860</div>
<div class="t" style="left:247.12px;top:636.53px;font-size:10px;font-weight:400;color:#222;transform:scaleX(0.9808);transform-origin:0 0;-webkit-text-stroke:0.25px #222;">10 920</div>
<div class="t" style="left:303.18px;top:636.53px;font-size:10px;font-weight:400;color:#222;transform:scaleX(0.9808);transform-origin:0 0;-webkit-text-stroke:0.25px #222;">10 980</div>
<div class="t" style="left:359.23px;top:636.53px;font-size:10px;font-weight:400;color:#222;transform:scaleX(1.0052);transform-origin:0 0;-webkit-text-stroke:0.25px #222;">11 040</div>
<div class="t" style="left:415.28px;top:636.53px;font-size:10px;font-weight:400;color:#222;transform:scaleX(1.0052);transform-origin:0 0;-webkit-text-stroke:0.25px #222;">11 100</div>
<div class="t" style="left:471.33px;top:636.53px;font-size:10px;font-weight:400;color:#222;transform:scaleX(1.0052);transform-origin:0 0;-webkit-text-stroke:0.25px #222;">11 160</div>
<div class="t" style="left:527.38px;top:636.53px;font-size:10px;font-weight:400;color:#222;transform:scaleX(1.0052);transform-origin:0 0;-webkit-text-stroke:0.25px #222;">11 220</div>
<div class="t" style="left:583.44px;top:636.53px;font-size:10px;font-weight:400;color:#222;transform:scaleX(1.0052);transform-origin:0 0;-webkit-text-stroke:0.25px #222;">11 280</div>
<div class="t" style="left:639.49px;top:636.53px;font-size:10px;font-weight:400;color:#222;transform:scaleX(1.0052);transform-origin:0 0;-webkit-text-stroke:0.25px #222;">11 340</div>
<div class="t" style="left:695.54px;top:636.53px;font-size:10px;font-weight:400;color:#222;transform:scaleX(1.0052);transform-origin:0 0;-webkit-text-stroke:0.25px #222;">11 400</div>
<div class="t" style="left:751.59px;top:636.53px;font-size:10px;font-weight:400;color:#222;transform:scaleX(1.0052);transform-origin:0 0;-webkit-text-stroke:0.25px #222;">11 460</div>
<div class="t" style="left:807.64px;top:636.53px;font-size:10px;font-weight:400;color:#222;transform:scaleX(1.0052);transform-origin:0 0;-webkit-text-stroke:0.25px #222;">11 520</div>
<div class="t" style="left:863.70px;top:636.53px;font-size:10px;font-weight:400;color:#222;transform:scaleX(1.0052);transform-origin:0 0;-webkit-text-stroke:0.25px #222;">11 580</div>
<div class="t" style="left:919.75px;top:636.53px;font-size:10px;font-weight:400;color:#222;transform:scaleX(1.0052);transform-origin:0 0;-webkit-text-stroke:0.25px #222;">11 640</div>
<div class="t" style="left:975.80px;top:636.53px;font-size:10px;font-weight:400;color:#222;transform:scaleX(1.0052);transform-origin:0 0;-webkit-text-stroke:0.25px #222;">11 700</div>
<div class="t" style="left:1031.85px;top:636.53px;font-size:10px;font-weight:400;color:#222;transform:scaleX(1.0052);transform-origin:0 0;-webkit-text-stroke:0.25px #222;">11 760</div>
<div class="t" style="left:1087.90px;top:636.53px;font-size:10px;font-weight:400;color:#222;transform:scaleX(1.0052);transform-origin:0 0;-webkit-text-stroke:0.25px #222;">11 820</div>
<div class="t" style="left:1143.96px;top:636.53px;font-size:10px;font-weight:400;color:#222;transform:scaleX(1.0052);transform-origin:0 0;-webkit-text-stroke:0.25px #222;">11 880</div>
<div class="t" style="left:557.00px;top:655.23px;font-size:10.6px;font-weight:700;color:#1a1a1a;">Frequency (MHz) (10^3)</div>
<div class="t" style="left:14.5px;top:405px;font-size:10.6px;font-weight:700;color:#1a1a1a;transform:translate(-50%,-50%) rotate(-90deg)">RF Level (dBm)</div>
<div class="t" style="left:516.70px;top:520.64px;font-size:12px;font-weight:700;color:#ffffff;">11 219 MHz</div>
<div class="t" style="left:693.90px;top:424.64px;font-size:12px;font-weight:700;color:#ffffff;">11 404 MHz</div>
<div class="r" style="left:573px;top:230px;width:54px;height:52px;background:#fff"></div>
<svg class="r" style="left:573px;top:230px" width="54" height="52">
<g fill="none" stroke-linecap="round">
<path d="M9.5,42.5 A23.5,23.5 0 0 1 42.1,8.9" stroke="#25308a" stroke-width="1.5"/>
<path d="M45,11.8 A23.5,23.5 0 0 1 50.3,30.2" stroke="#25308a" stroke-width="1.5"/>
<path d="M49.8,32.6 A23.5,23.5 0 0 1 44.5,42.5" stroke="#25308a" stroke-width="1.5"/>
<path d="M40.2,14.2 A8,8 0 0 1 40.2,25.8" stroke="#c82828" stroke-width="1.4"/>
<path d="M42.6,11.8 A11,11 0 0 1 42.6,28.2" stroke="#c82828" stroke-width="1.4"/>
<path d="M18.6,7 C19.5,16 20.5,24 21.5,31 C25,35 28,37.5 31.5,40 C28,30 23,16 18.6,7 Z" fill="#eef0f8" stroke="#3a4898" stroke-width="0.9"/>
<path d="M21.5,31 L36.5,23.6 M33.5,23 L37,23.5 L34.5,26" stroke="#7a86c0" stroke-width="0.9"/>
<path d="M13,40 C11,36 13,31.5 17,31.5 C20,32 20,36 18.5,39" stroke="#5a66a8" stroke-width="0.9"/>
<path d="M8,43 L46,43" stroke="#25308a" stroke-width="1.3"/>
<path d="M13,43 L19,38 L25,43" stroke="#3a4898" stroke-width="1"/>
</g>
<text x="27.5" y="50.8" text-anchor="middle" font-family="Liberation Serif" font-weight="700" font-size="8.2" textLength="50" lengthAdjust="spacingAndGlyphs"><tspan fill="#c02828">DX</tspan><tspan fill="#25308a">SATCS.COM</tspan></text>
</svg>
<div class="r" style="left:660px;top:470px;width:142px;height:29px;background:#fdfdfd;border:1px solid #e4e4e4;box-shadow:1px 1px 1px rgba(0,0,0,0.25)"></div>
<div class="r" style="left:665.2px;top:473.6px;width:13px;height:13px;border-radius:50%;background:#2a7ad2"></div>
<svg class="r" style="left:665.2px;top:473.6px" width="13" height="13"><circle cx="6.5" cy="3.4" r="1.1" fill="#fff"/><rect x="5.6" y="5.4" width="1.8" height="5" fill="#fff"/></svg>
<div class="t" style="left:683.40px;top:473.16px;font-size:9.5px;font-weight:700;color:#505050;transform:scaleX(1.0493);transform-origin:0 0;">11 350,000 MHz, Vertical</div>
<div class="t" style="left:683.40px;top:485.96px;font-size:9.5px;font-weight:400;color:#666666;transform:scaleX(0.9827);transform-origin:0 0;">Signal: -54,02 dBm</div>
<svg class="r" style="left:648px;top:445px" width="30" height="30"><path d="M11.6,8.6 C11.6,7.4 13.7,7.4 13.7,8.6 L13.7,13.2 C13.7,12.2 15.6,12.2 15.6,13.2 L15.6,13.6 C15.6,12.6 17.5,12.6 17.5,13.6 L17.5,14 C17.5,13.1 19.3,13.1 19.3,14 L19.3,14.6 C19.3,13.8 21,13.8 21,14.6 L21,19.6 C21,21.8 19.8,23.6 17.6,23.6 L14,23.6 C12.8,23.6 12,22.6 11.2,21.2 L8.4,16.9 C7.8,15.8 9.1,14.9 10,15.8 L11.6,17.6 Z" fill="#fff" stroke="#111" stroke-width="0.8" stroke-linejoin="round"/><path d="M15.6,13.6 V16.5 M17.5,14 V16.5 M19.3,14.6 V16.5" stroke="#555" stroke-width="0.6"/></svg>
<div class="r" style="left:0px;top:671px;width:1200px;height:2px;background:#fafafa"></div>
<div class="t" style="left:2.50px;top:678.73px;font-size:10.6px;font-weight:400;color:#2a2a2a;-webkit-text-stroke:0.2px #2a2a2a;">11 350,000 MHz, Vertical: -54,02 dBm</div>
<div class="r" style="left:0px;top:691px;width:1200px;height:1px;background:#dcdcdc"></div>
<div class="r" style="left:0px;top:692px;width:1200px;height:20px;background:#f0f0f0"></div>
<div class="t" style="left:3.00px;top:697.54px;font-size:9.4px;font-weight:700;color:#1818b0;transform:scaleX(0.9392);transform-origin:0 0;text-decoration:underline;">FullTS [F: 1]</div>
<div class="r" style="left:122px;top:694px;width:1px;height:18px;background:#c4c4c4"></div>
<div class="r" style="left:123px;top:694px;width:1px;height:18px;background:#fff"></div>
<div class="r" style="left:125px;top:695px;width:516px;height:17px;border:1px solid #c0c0c0;border-bottom:none;background:linear-gradient(#f6f6f6 0,#eaeaea 40%,#d8d8d8 55%,#e4e4e4 100%)"></div>
<div class="t" style="left:127.50px;top:699.53px;font-size:10px;font-weight:400;color:#444;transform:scaleX(0.9445);transform-origin:0 0;">No signal.</div>
<div class="r" style="left:644px;top:695px;width:95px;height:17px;border:1px solid #c0c0c0;border-bottom:none;background:linear-gradient(#f6f6f6 0,#eaeaea 40%,#d8d8d8 55%,#e4e4e4 100%)"></div>
<div class="t" style="left:679.00px;top:699.87px;font-size:9.6px;font-weight:400;font-style:italic;color:#4a4a4a;transform:scaleX(0.9777);transform-origin:0 0;">L: 0%</div>
<div class="r" style="left:743px;top:695px;width:95px;height:17px;border:1px solid #c0c0c0;border-bottom:none;background:linear-gradient(#f6f6f6 0,#eaeaea 40%,#d8d8d8 55%,#e4e4e4 100%)"></div>
<div class="t" style="left:777.00px;top:699.87px;font-size:9.6px;font-weight:400;font-style:italic;color:#4a4a4a;transform:scaleX(0.9746);transform-origin:0 0;">Q: 0%</div>
<div class="r" style="left:842px;top:695px;width:160px;height:17px;border:1px solid #c0c0c0;border-bottom:none;background:linear-gradient(#f6f6f6 0,#eaeaea 40%,#d8d8d8 55%,#e4e4e4 100%)"></div>
<div class="t" style="left:854.80px;top:698.67px;font-size:9.6px;font-weight:700;color:#333333;transform:scaleX(0.9895);transform-origin:0 0;">0,0 dB (Need 4,0 dB to LOCK)</div>
<div class="r" style="left:1007px;top:695px;width:34px;height:17px;border:1px solid #c0c0c0;border-bottom:none;background:linear-gradient(#f6f6f6 0,#eaeaea 40%,#d8d8d8 55%,#e4e4e4 100%)"></div>
<div class="t" style="left:1016.50px;top:700.73px;font-size:8px;font-weight:400;color:#606060;transform:scaleX(0.8877);transform-origin:0 0;">Lock</div>
<div class="r" style="left:1046px;top:695px;width:34px;height:17px;border:1px solid #c0c0c0;border-bottom:none;background:linear-gradient(#f6f6f6 0,#eaeaea 40%,#d8d8d8 55%,#e4e4e4 100%)"></div>
<div class="t" style="left:1051.00px;top:700.73px;font-size:8px;font-weight:400;color:#606060;transform:scaleX(0.8435);transform-origin:0 0;">DiSEqC</div>
<div class="r" style="left:1085px;top:695px;width:34px;height:17px;border:1px solid #b0c8b0;border-bottom:none;background:linear-gradient(#f0f8f0 0,#c8ecc8 45%,#70d070 100%)"></div>
<div class="t" style="left:1091.00px;top:700.73px;font-size:8px;font-weight:400;color:#306030;transform:scaleX(0.8997);transform-origin:0 0;">Device</div>
<div class="t" style="left:1127.00px;top:699.37px;font-size:9.6px;font-weight:400;color:#1e1e1e;">Control</div>
<div class="r" style="left:1163px;top:697.5px;width:11px;height:11px;border-radius:50%;border:1px solid #5a7ac8;background:radial-gradient(circle at 50% 40%,#ffffff 0,#c8d8f4 60%,#90a8e0 100%)"></div><svg class="r" style="left:1163px;top:697.5px" width="11" height="11"><path d="M4.2,3 L6.8,3 L6.2,8 L4.6,8Z" fill="#3050b0"/></svg>
<svg class="r" style="left:1176px;top:701px" width="6" height="4"><path d="M0,0 H5 L2.5,3Z" fill="#222"/></svg>
<svg class="r" style="left:1190px;top:700px" width="10" height="12"><g fill="#b8b8b8"><rect x="7" y="3" width="1.5" height="1.5"/><rect x="4" y="6" width="1.5" height="1.5"/><rect x="7" y="6" width="1.5" height="1.5"/><rect x="1" y="9" width="1.5" height="1.5"/><rect x="4" y="9" width="1.5" height="1.5"/><rect x="7" y="9" width="1.5" height="1.5"/></g></svg>
</body></html>
